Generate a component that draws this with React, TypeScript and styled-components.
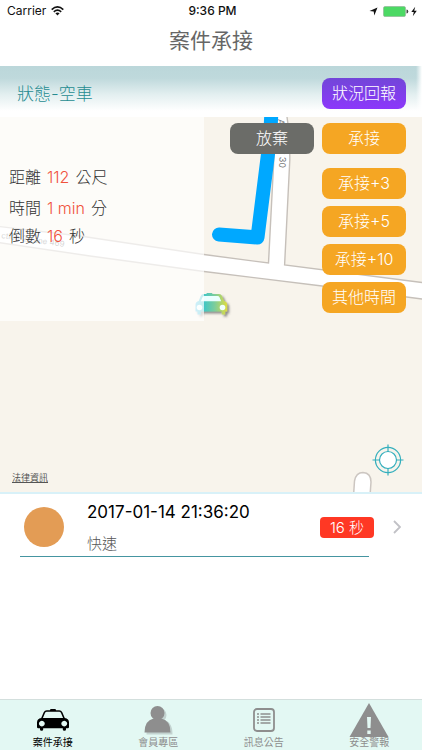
import React from "react";
import styled, { createGlobalStyle } from "styled-components";

const GlobalStyle = createGlobalStyle`
  *, *::before, *::after { box-sizing: border-box; }
  html, body, #root { height: 100%; }
  body {
    margin: 0;
    background: #fff;
    font-family: Inter, "Noto Sans CJK TC", sans-serif;
    color: #333;
  }
  button { font: inherit; border: 0; cursor: pointer; }
`;

const Screen = styled.div`
  min-height: 100%;
  display: flex;
  flex-direction: column;
`;

const StatusBar = styled.div`
  height: 22px;
  padding: 0 4px 0 7px;
  display: grid;
  grid-template-columns: 1fr auto 1fr;
  align-items: center;
  font-size: 12px;
  line-height: 22px;
  color: #111;
`;

const StatusGroup = styled.div<{ $end?: boolean }>`
  display: flex;
  align-items: center;
  gap: 5px;
  justify-content: ${(p) => (p.$end ? "flex-end" : "flex-start")};
`;

const Clock = styled.time`
  font-weight: 500;
`;

const Title = styled.h1`
  margin: 0;
  height: 44px;
  padding-bottom: 6px;
  font-size: 21px;
  line-height: 38px;
  font-weight: 400;
  text-align: center;
  color: #666;
`;

const StateBar = styled.header`
  height: 51px;
  padding: 4px 16px 0 17px;
  display: flex;
  align-items: center;
  justify-content: space-between;
  background:
    linear-gradient(to left, #fff, rgba(255, 255, 255, 0) 6px),
    linear-gradient(#bbd7da 0, #bfd9dc 24%, #e3eff0 56%, #fff 88%);
`;

const StateLabel = styled.span`
  font-size: 17px;
  line-height: 24px;
  font-weight: 300;
  color: #268c91;
`;

const tones = {
  accept: "#f5a623",
  reject: "#6b6c68",
  report: "linear-gradient(#7246d8, #8c37fb)",
};

const ActionButton = styled.button<{ $tone: keyof typeof tones }>`
  width: 84px;
  height: 31px;
  padding: 0;
  border-radius: 8px;
  background: ${(p) => tones[p.$tone]};
  color: #fff;
  font-size: 16px;
  line-height: 31px;
  font-weight: 300;
  text-align: center;
`;

const MapArea = styled.main`
  position: relative;
  height: 377px;
  border-bottom: 2px solid #d8f1f8;
  background: #f8f4ec;
  overflow: hidden;
`;

const MapDrawing = styled.svg`
  position: absolute;
  inset: 0;
  width: 100%;
  height: 100%;
`;

const TripPanel = styled.dl`
  position: absolute;
  top: 0;
  left: 0;
  width: 204px;
  height: 204px;
  margin: 0;
  padding: 46px 9px 0;
  background: rgba(255, 255, 255, 0.7);
`;

const TripRow = styled.div<{ $tall?: boolean }>`
  display: flex;
  gap: 6px;
  font-size: 16px;
  line-height: 28px;
  font-weight: 300;
  padding-bottom: ${(p) => (p.$tall ? "3px" : "0")};

  dt, dd { margin: 0; }
`;

const TripValue = styled.strong`
  font-weight: 300;
  color: #f0523d;
  margin-right: 6px;
`;

const Actions = styled.div`
  position: absolute;
  top: 6px;
  right: 16px;
  display: flex;
  flex-direction: column;
  align-items: flex-end;
  gap: 7px;
`;

const MainActions = styled.div`
  display: flex;
  gap: 8px;
  padding-bottom: 7px;
`;

const LegalLink = styled.a`
  position: absolute;
  left: 12px;
  bottom: 6px;
  font-size: 9px;
  line-height: 16px;
  color: #555;
  text-decoration: underline;
`;

const LocateButton = styled.button`
  position: absolute;
  right: 18px;
  bottom: 16px;
  width: 32px;
  height: 32px;
  padding: 0;
  background: none;
`;

const CaseRow = styled.a`
  display: grid;
  grid-template-columns: 40px 1fr auto 8px;
  align-items: center;
  height: 66px;
  padding: 0 21px 0 24px;
  text-decoration: none;
  color: #000;
`;

const CaseDot = styled.span`
  width: 40px;
  height: 40px;
  border-radius: 50%;
  background: #e39c55;
`;

const CaseText = styled.div`
  padding: 2px 0 0 23px;
  display: flex;
  flex-direction: column;
  gap: 10px;
`;

const CaseTime = styled.time`
  font-size: 17px;
  line-height: 22px;
`;

const CaseKind = styled.span`
  font-size: 15px;
  line-height: 22px;
  font-weight: 300;
  color: #555;
`;

const Countdown = styled.span`
  width: 54px;
  height: 21px;
  margin-right: 19px;
  border-radius: 4px;
  background: #ff3824;
  color: #fff;
  font-size: 15px;
  line-height: 21px;
  font-weight: 300;
  text-align: center;
`;

const CaseItem = styled.li`
  &::after {
    content: "";
    display: block;
    height: 1px;
    margin: -4px 53px 0 20px;
    background: #4595a1;
  }
`;

const CaseList = styled.ul`
  list-style: none;
  margin: 0;
  padding: 0;
  flex: 1;
`;

const TabBar = styled.nav`
  height: 51px;
  display: grid;
  grid-template-columns: repeat(4, 1fr);
  border-top: 1px solid #d3dfdd;
  background: #e3f8f3;
`;

const Tab = styled.a<{ $active?: boolean }>`
  display: grid;
  grid-template-rows: 35px 10px;
  align-content: start;
  padding-top: 2px;
  justify-items: center;
  align-items: center;
  text-decoration: none;
  color: ${(p) => (p.$active ? "#000" : "#8e8e8e")};
  font-size: 10px;
  line-height: 10px;

  svg { display: block; }
`;

const WifiIcon = () => (
  <svg width="13" height="10" viewBox="0 0 13 10" fill="none" stroke="#111" strokeWidth="1.6" aria-hidden="true">
    <path d="M.7 3.6Q6.5-1.8 12.3 3.6M2.8 5.9Q6.5 2.4 10.2 5.9" />
    <path d="M4.4 7.3Q6.5 5.5 8.6 7.3L6.5 9.6Z" fill="#111" stroke="none" />
  </svg>
);

const LocationIcon = () => (
  <svg width="9" height="9" viewBox="0 0 9 9" aria-hidden="true">
    <path d="M8.5.5 5.3 8.5 4.7 4.4.5 4Z" fill="#111" />
  </svg>
);

const BatteryIcon = () => (
  <svg width="35" height="11" viewBox="0 0 35 11" aria-hidden="true">
    <rect x=".5" y=".5" width="22" height="10" rx="1.5" fill="#4cd964" stroke="#8fae95" strokeWidth=".6" />
    <path d="M23.5 3.5q1.8 0 1.8 2t-1.8 2Z" fill="#444" />
    <path d="M32.2.8 28.3 6.1H30.8L29.8 10.2 33.8 4.7H31.2Z" fill="#111" />
  </svg>
);

const CityMap = () => (
  <MapDrawing viewBox="0 117 422 375" preserveAspectRatio="xMidYMid slice" aria-hidden="true">
    <defs>
      <linearGradient id="carPaint">
        <stop offset="0" stopColor="#59c8ed" />
        <stop offset=".28" stopColor="#43c6c4" />
        <stop offset=".6" stopColor="#7bcd9c" />
        <stop offset="1" stopColor="#dfdc42" />
      </linearGradient>
      <filter id="carShadow" x="-20%" y="-20%" width="150%" height="160%">
        <feDropShadow dx="2" dy="2" stdDeviation="1.2" floodColor="#555" floodOpacity=".65" />
      </filter>
    </defs>
    <path
      d="M-5 226 80 236 204 254.5 268.5 263 276 117 276 100H284L287 117Q290 135 289.8 160L284.6 265 422 282.5 430 283.5V300L422 299 322 286 204 271.5 90 256-5 242Z"
      fill="#fff" stroke="#c6c0ba" strokeWidth="1.4"
    />
    <path d="M353.5 496 354.5 481Q356 472.5 363 472.5 371 473 371 482L370 496" fill="#fff" stroke="#ccc6c1" strokeWidth="1.5" />
    <g fill="#777" fontFamily="Inter, sans-serif">
      <text transform="translate(1 238) rotate(8)" fontSize="8">ction 2 Lane 469</text>
      <text textAnchor="end" transform="translate(279 168) rotate(92)" fontSize="9">y 30</text>
      <text transform="translate(278 119) rotate(92)" fontSize="9">A</text>
    </g>
    <path d="M271.5 110 270.5 130 268 154 257.5 237.5 219 234.5" fill="none" stroke="#00a8ff" strokeWidth="14" strokeLinecap="round" strokeLinejoin="round" />
    <g filter="url(#carShadow)">
      <path d="M207 293h5l.5 1h6.5q2.2 0 3 2l2 5q3 .6 3.2 3.5v7h-2v3h-3.5v-3H201v3h-3.5v-3h-2v-7q.2-3 3.2-3.5l2-5q.8-2 3-2h2.5Z" fill="url(#carPaint)" />
      <path d="M204.5 296h13q1.5 0 2 1.3l1.7 4h-20.4l1.7-4q.5-1.3 2-1.3Z" fill="#eaffff" />
      <circle cx="199.5" cy="307.5" r="2.8" fill="#f0ffff" />
      <circle cx="222.5" cy="307.5" r="2.8" fill="#f0ffff" />
    </g>
  </MapDrawing>
);

const LocateIcon = () => (
  <svg width="32" height="32" viewBox="0 0 32 32" fill="none" stroke="#35afbd" aria-hidden="true">
    <circle cx="16" cy="16" r="12.6" strokeWidth="1.2" />
    <circle cx="16" cy="16" r="8.5" fill="#fff" strokeWidth="1.2" />
    <path d="M16 .5V8M16 24v7.5M.5 16H8M24 16h7.5" strokeWidth="1.2" />
  </svg>
);

const Chevron = () => (
  <svg width="8" height="14" viewBox="0 0 8 14" fill="none" stroke="#c1c1c6" strokeWidth="1.8" aria-hidden="true">
    <path d="M1 1 7 7 1 13" />
  </svg>
);

const TaxiIcon = () => (
  <svg width="32" height="24" viewBox="0 0 32 24" aria-hidden="true">
    <path
      fill="currentColor" fillRule="evenodd"
      d="M13.5 1h5l.5 1.2h3.3q2 0 2.9 1.9l2.6 6q4.2.5 4.2 4.5v4.5q0 1.2-1.3 1.2H29V21.5q0 1.3-1.6 1.3t-1.6-1.3V20.3H6.2v1.2q0 1.3-1.6 1.3T3 21.5V20.3H1.3Q0 20.3 0 19.1V14.6q0-4 4.2-4.5l2.6-6q.9-1.9 2.9-1.9H13ZM9.8 3.7q-1.2 0-1.7 1.1L5.9 10.1H26.1L23.9 4.8q-.5-1.1-1.7-1.1ZM4.8 12.7a2.9 2.9 0 1 0 .1 0ZM27.2 12.7a2.9 2.9 0 1 0 .1 0Z"
    />
  </svg>
);

const PersonIcon = () => (
  <svg width="30" height="30" viewBox="0 0 30 30" aria-hidden="true">
    <g fill="#c3d3d0" transform="translate(2 2)">
      <circle cx="14.5" cy="8" r="7" />
      <path d="M1.5 27.5Q1.5 14 11 13h7q9.5 1 9.5 14.5Z" />
    </g>
    <g fill="currentColor">
      <circle cx="14.5" cy="8" r="7" />
      <path d="M1.5 27.5Q1.5 15.5 10.5 13.5h8q9 2 9 14Z" />
    </g>
  </svg>
);

const NoticeIcon = () => (
  <svg width="22" height="24" viewBox="0 0 22 24" fill="none" stroke="currentColor" aria-hidden="true">
    <rect x="1" y="1" width="20" height="22" rx="3" strokeWidth="1.8" />
    <path d="M7.5 6H17.5M7.5 9H17.5M7.5 12H17.5M7.5 15H17.5" strokeWidth="1.3" />
    <path d="M4 6h2M4 9h2M4 12h2M4 15h2" strokeWidth="1.5" />
  </svg>
);

const AlertIcon = () => (
  <svg width="40" height="34" viewBox="0 0 40 34" aria-hidden="true">
    <path d="M20 0 39.5 34H.5Z" fill="currentColor" />
    <path d="M18 14h4l-.5 11h-3ZM18.3 27.5h3.4V31h-3.4Z" fill="#e3f8f3" />
  </svg>
);

const trip = [
  { label: "距離", value: "112", unit: "公尺", tall: true },
  { label: "時間", value: "1 min", unit: "分" },
  { label: "倒數", value: "16", unit: "秒" },
];

const replies = ["承接+3", "承接+5", "承接+10", "其他時間"];

const tabs = [
  { label: "案件承接", Icon: TaxiIcon, active: true },
  { label: "會員專區", Icon: PersonIcon },
  { label: "訊息公告", Icon: NoticeIcon },
  { label: "安全警報", Icon: AlertIcon },
];

export default function App() {
  return (
    <Screen lang="zh-Hant">
      <GlobalStyle />
      <StatusBar>
        <StatusGroup>
          <span>Carrier</span>
          <WifiIcon />
        </StatusGroup>
        <Clock>9:36 PM</Clock>
        <StatusGroup $end>
          <LocationIcon />
          <BatteryIcon />
        </StatusGroup>
      </StatusBar>
      <Title>案件承接</Title>
      <StateBar>
        <StateLabel>狀態-空車</StateLabel>
        <ActionButton type="button" $tone="report">狀況回報</ActionButton>
      </StateBar>
      <MapArea>
        <CityMap />
        <TripPanel>
          {trip.map((row) => (
            <TripRow key={row.label} $tall={row.tall}>
              <dt>{row.label}</dt>
              <dd>
                <TripValue>{row.value}</TripValue>
                {row.unit}
              </dd>
            </TripRow>
          ))}
        </TripPanel>
        <Actions>
          <MainActions>
            <ActionButton type="button" $tone="reject">放棄</ActionButton>
            <ActionButton type="button" $tone="accept">承接</ActionButton>
          </MainActions>
          {replies.map((label) => (
            <ActionButton key={label} type="button" $tone="accept">{label}</ActionButton>
          ))}
        </Actions>
        <LegalLink href="#legal">法律資訊</LegalLink>
        <LocateButton type="button" aria-label="定位">
          <LocateIcon />
        </LocateButton>
      </MapArea>
      <CaseList>
        <CaseItem>
          <CaseRow href="#case">
            <CaseDot />
            <CaseText>
              <CaseTime>2017-01-14 21:36:20</CaseTime>
              <CaseKind>快速</CaseKind>
            </CaseText>
            <Countdown>16 秒</Countdown>
            <Chevron />
          </CaseRow>
        </CaseItem>
      </CaseList>
      <TabBar>
        {tabs.map(({ label, Icon, active }) => (
          <Tab key={label} href="#" $active={active} aria-current={active ? "page" : undefined}>
            <Icon />
            <span>{label}</span>
          </Tab>
        ))}
      </TabBar>
    </Screen>
  );
}
